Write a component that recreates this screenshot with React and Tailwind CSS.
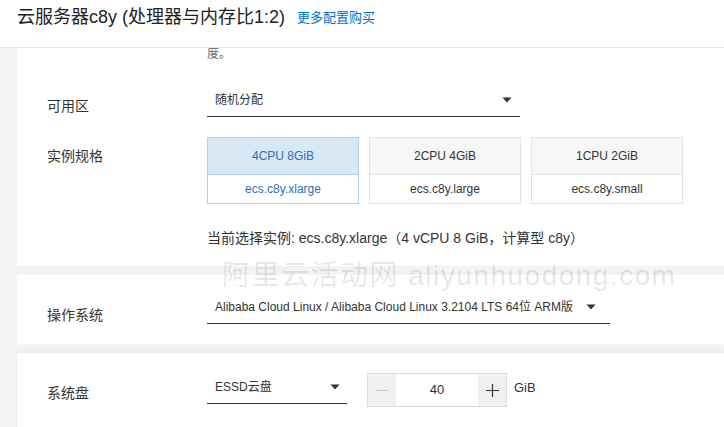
import React from "react";

const FONT = { fontFamily: '"Liberation Sans", Arial, "Noto Sans CJK SC", sans-serif' };

function Caret() {
  return (
    <svg width="10" height="6" viewBox="0 0 10 6" className="shrink-0">
      <path d="M0.5 0.5 L9.5 0.5 L5 5.5 Z" fill="#333" />
    </svg>
  );
}

function Select({ text, width, pr }) {
  return (
    <div
      className="h-[33px] border-b border-[#333] flex items-center justify-between pl-[8px] text-[12px] text-[#333]"
      style={{ width, paddingRight: pr }}
    >
      <span className="whitespace-nowrap">{text}</span>
      <Caret />
    </div>
  );
}

function Label({ children, pt = "pt-[12px]" }) {
  return (
    <div className={`w-[160px] shrink-0 text-[14px] leading-[20px] text-[#333] ${pt}`}>{children}</div>
  );
}

function SpecCard({ top, bottom, selected }) {
  return (
    <div
      className={
        "w-[152px] border flex flex-col text-[12px] " +
        (selected ? "border-[#b3d2ec]" : "border-[#e3e3e3]")
      }
    >
      <div
        className={
          "h-[37px] flex items-center justify-center border-b " +
          (selected
            ? "bg-[#d8e8f5] text-[#2b6fc2] border-[#b3d2ec]"
            : "bg-[#f7f7f7] text-[#333] border-[#e3e3e3]")
        }
      >
        {top}
      </div>
      <div
        className={
          "h-[28px] flex items-center justify-center bg-white " +
          (selected ? "text-[#2b6fc2]" : "text-[#333]")
        }
      >
        {bottom}
      </div>
    </div>
  );
}

export default function App() {
  return (
    <div className="w-[724px] h-[427px] overflow-hidden bg-[#f2f3f5] relative" style={FONT}>
      <div className="h-[48px] bg-white border-b border-[#e6e6e6] flex items-center pl-[17px] pb-[14px]">
        <span className="text-[18px] text-[#222] leading-[24px]">云服务器c8y (处理器与内存比1:2)</span>
        <span className="ml-[12px] text-[13px] text-[#0070cc] leading-[20px] mt-[2px]">更多配置购买</span>
      </div>

      <div className="pl-[17px] flex flex-col">
        {/* card 1 */}
        <div className="bg-white h-[218px] pl-[30px] flex flex-col">
          <div className="pl-[160px] text-[12px] leading-[12px] text-[#666] h-[13px] overflow-hidden">度。</div>
          <div className="flex mt-[23px]">
            <Label>可用区</Label>
            <Select text="随机分配" width="313px" pr="8px" />
          </div>
          <div className="flex mt-[20px]">
            <Label pt="pt-[9px]">实例规格</Label>
            <div className="flex gap-[10px]">
              <SpecCard top="4CPU 8GiB" bottom="ecs.c8y.xlarge" selected />
              <SpecCard top="2CPU 4GiB" bottom="ecs.c8y.large" />
              <SpecCard top="1CPU 2GiB" bottom="ecs.c8y.small" />
            </div>
          </div>
          <div className="pl-[160px] mt-[24px] text-[14px] leading-[20px] text-[#333] whitespace-nowrap">
            当前选择实例: ecs.c8y.xlarge（4 vCPU 8 GiB，计算型 c8y）
          </div>
        </div>

        {/* card 2 */}
        <div className="bg-white h-[69px] mt-[9px] pl-[30px] pt-[16px]">
          <div className="flex">
            <Label pt="pt-[14px]">操作系统</Label>
            <Select text="Alibaba Cloud Linux / Alibaba Cloud Linux 3.2104 LTS 64位 ARM版" width="403px" pr="14px" />
          </div>
        </div>

        {/* card 3 */}
        <div className="bg-white h-[80px] mt-[9px] pl-[30px] pt-[18px] shadow-[0_-2px_4px_rgba(0,0,0,0.04)]">
          <div className="flex items-start">
            <Label pt="pt-[12px]">系统盘</Label>
            <Select text="ESSD云盘" width="140px" pr="7px" />
            <div className="ml-[20px] mt-[2px] w-[140px] h-[34px] border border-[#dcdcdc] flex">
              <div className="w-[28px] bg-[#f0f0f0] flex items-center justify-center">
                <div className="w-[12px] h-[1px] bg-[#c8c8c8]" />
              </div>
              <div className="flex-1 bg-white flex items-center justify-center text-[13px] text-[#333]">40</div>
              <div className="w-[28px] bg-[#f0f0f0] flex items-center justify-center">
                <svg width="13" height="13" viewBox="0 0 13 13">
                  <path d="M6.5 0 V13 M0 6.5 H13" stroke="#333" strokeWidth="1.2" />
                </svg>
              </div>
            </div>
            <div className="ml-[7px] h-[34px] flex items-center text-[13px] text-[#333]">GiB</div>
          </div>
        </div>
      </div>

      <div
        className="absolute left-[222px] top-[259px] text-[28px] leading-[34px] text-[rgba(0,0,0,0.1)] whitespace-nowrap pointer-events-none tracking-[1.5px]"
      >
        阿里云活动网 aliyunhuodong.com
      </div>
    </div>
  );
}
